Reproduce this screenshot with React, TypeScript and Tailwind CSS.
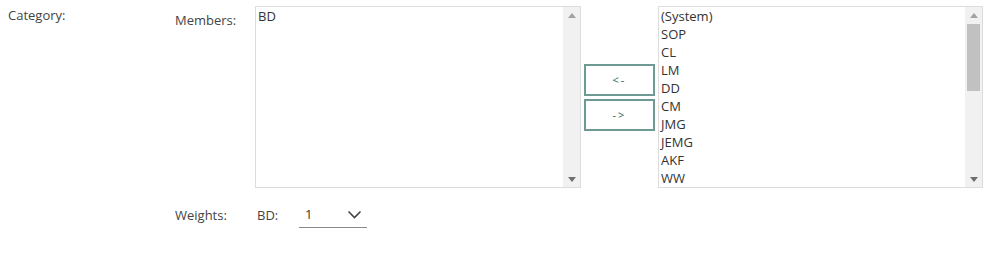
import React from "react";

const others = ["(System)", "SOP", "CL", "LM", "DD", "CM", "JMG", "JEMG", "AKF", "WW"];

function Arrow({ dir }: { dir: "up" | "down" }) {
  return (
    <svg width="8" height="5" viewBox="0 0 8 5" className="block">
      {dir === "up" ? <path d="M4 0 L8 5 L0 5 Z" fill="#a3a3a3" /> : <path d="M0 0 L8 0 L4 5 Z" fill="#6f6f6f" />}
    </svg>
  );
}

function ListBox({ items, width, thumb }: { items: string[]; width: string; thumb?: boolean }) {
  return (
    <div className={`flex h-[182px] ${width} border border-[#dcdcdc] bg-white`}>
      <div className="flex-1 overflow-hidden pl-[2px]">
        {items.map((it) => (
          <div key={it} className="h-[18px] leading-[18px] text-[13px] text-[#333]">
            {it}
          </div>
        ))}
      </div>
      <div className="flex w-[17px] flex-col items-center bg-[#f1f1f1]">
        <div className="flex h-[16px] items-center justify-center pt-[1px]">
          <Arrow dir="up" />
        </div>
        {thumb ? <div className="mt-[1px] h-[67px] w-[13px] bg-[#c1c1c1]" /> : null}
        <div className="flex-1" />
        <div className="flex h-[16px] items-center justify-center">
          <Arrow dir="down" />
        </div>
      </div>
    </div>
  );
}

function MoveButton({ label }: { label: string }) {
  return (
    <button className="flex h-[32px] w-[71px] items-center justify-center border-2 border-[#6f9a93] bg-white text-[11px] tracking-[2px] text-[#2f5f5a]">
      {label}
    </button>
  );
}

export default function App() {
  return (
    <div
      className="flex h-[253px] w-[1005px] bg-white pl-2 pt-[6px] text-[#444]"
      style={{ fontFamily: '"Open Sans", "Noto Sans", sans-serif' }}
    >
      <div className="w-[167px] pt-[1px] text-[13px] leading-[16px]">Category:</div>
      <div className="flex flex-col">
        <div className="flex">
          <div className="w-[80px] pt-[6px] text-[13px] leading-[16px]">Members:</div>
          <ListBox items={["BD"]} width="w-[326px]" />
          <div className="ml-[3px] mr-[3px] flex flex-col justify-center gap-[3px] pt-[1px]">
            <MoveButton label="<-" />
            <MoveButton label="->" />
          </div>
          <ListBox items={others} width="w-[325px]" thumb />
        </div>
        <div className="mt-[13px] flex items-center text-[13px] leading-[16px]">
          <div className="w-[82px]">Weights:</div>
          <div className="w-[42px]">BD:</div>
          <div className="flex h-[27px] w-[68px] items-center justify-between border-b border-[#8a8a8a] pl-[6px] pr-[5px] text-[#333]">
            <span>1</span>
            <svg width="15" height="9" viewBox="0 0 15 9">
              <path d="M1.5 1.5 L7.5 7.5 L13.5 1.5" fill="none" stroke="#444" strokeWidth="1.6" />
            </svg>
          </div>
        </div>
      </div>
    </div>
  );
}
